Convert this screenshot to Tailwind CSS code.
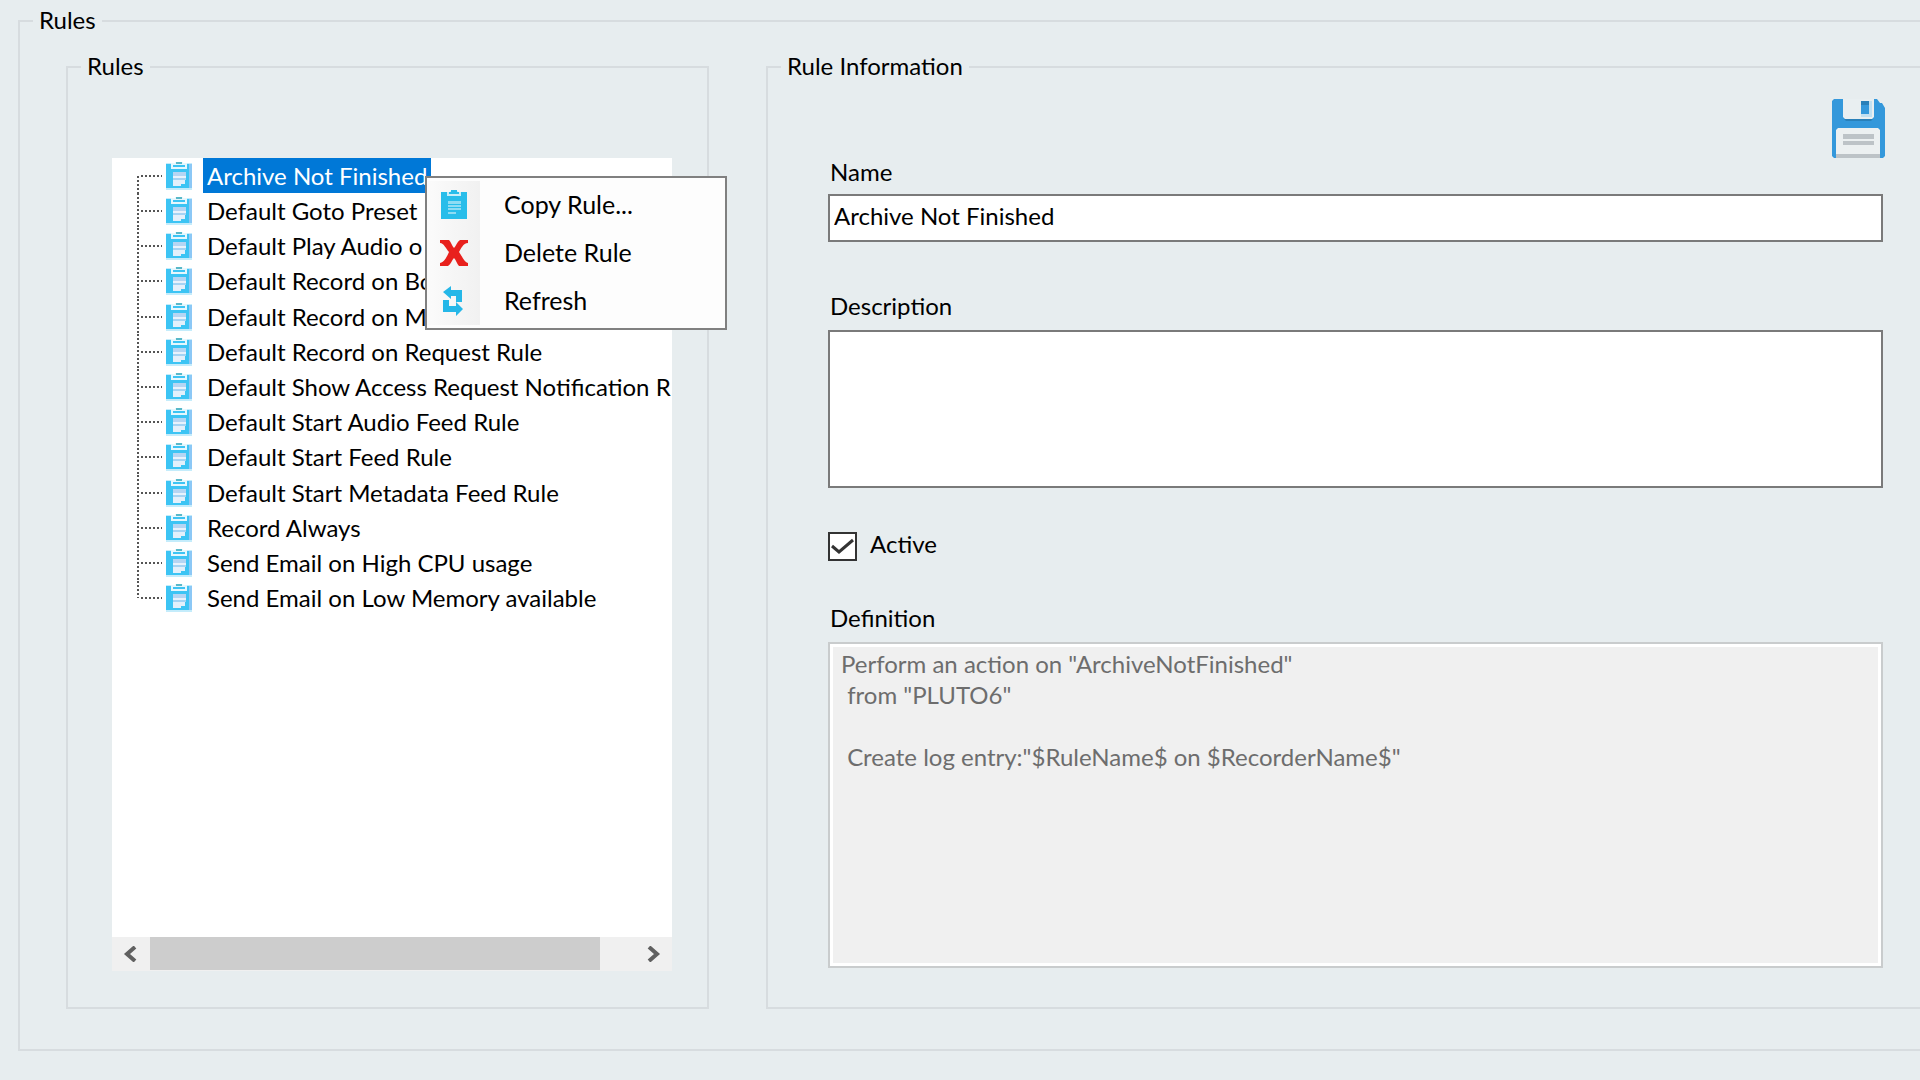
<!DOCTYPE html>
<html lang="en">
  <head>
    <meta charset="UTF-8">
    <meta name="viewport" content="width=device-width, initial-scale=1.0">
    <title>Rules</title>
    <script src="https://cdn.jsdelivr.net/npm/@tailwindcss/browser@4"></script>
  </head>
  <body class="flex min-h-screen flex-col bg-[#e7edef] pt-[6px] pb-[29px] pl-[18px] font-['Lato',sans-serif] text-2xl leading-7 text-black">
    <!-- Shared icons -->
    <svg class="hidden" aria-hidden="true">
      <symbol id="clipboard" viewBox="0 0 26 28">
        <path fill="#3cc4f4" d="M0 2h26v24H0z" />
        <path fill="#8cc8f6" d="M23 2h3v24h-3z" />
        <path fill="#c4ecfb" d="M0 26h26v2H0zM0 1h5v1H0zM21 1h5v1h-5z" />
        <path fill="#e6f7fd" d="M5 1h4V0h8v1h4v6H5z" />
        <path fill="#3cc4f4" d="M7 3h12v2H7z" />
        <path fill="#58b8c8" d="M10 0h6v2h-6z" />
        <path fill="#b5d5f3" d="M7 10h13v4H7z" />
        <path fill="#e8f2fc" d="M7 14h13v2H7z" />
        <path fill="#a5d3f3" d="M7 16h13v2H7z" />
        <path fill="#e3f0fb" d="M7 18h12v4h-4v2H7z" />
      </symbol>
      <symbol id="copy" viewBox="0 0 28 30">
        <path fill="#28bdea" d="M1 2h26v27H1z" />
        <path fill="#c9eef9" d="M7 2h3V1h8v1h3v4H7z" />
        <path fill="#28bdea" d="M9 2h10v2H9zM11 0h6v3h-6z" />
        <path fill="#8edcf3" d="M8 11h13v3H8zM8 15h13v2H8zM8 18h13v2H8zM8 22h8v2H8z" />
      </symbol>
    </svg>

    <fieldset class="flex min-w-0 flex-1 flex-col border-2 border-r-0 border-[#d7dcdf]">
      <legend class="ml-[13px] px-[6px] pb-[2px]">Rules</legend>
      <div class="grid flex-1 grid-cols-[643fr_1154fr] gap-[57px] pt-4 pb-10 pl-[46px]">

        <!-- Rule tree -->
        <fieldset class="flex min-w-0 flex-col border-2 border-[#d7dcdf]">
          <legend class="ml-[13px] px-[6px] pb-[2px]">Rules</legend>
          <div class="relative mt-[76px] mr-[35px] mb-[36px] ml-[44px] flex flex-1 flex-col bg-white">
            <div class="flex-1 overflow-hidden">
              <ul id="tree" class="grid h-[458px] auto-rows-fr whitespace-nowrap"></ul>
            </div>
            <!-- Horizontal scrollbar -->
            <div class="flex h-[34px] bg-[#f0f0f0]">
              <button type="button" aria-label="Scroll left" class="flex w-[38px] items-center justify-center">
                <svg class="h-4 w-4" viewBox="0 0 16 16" fill="none" stroke="#606060" stroke-width="4"><path d="m12 1-8 7 8 7" /></svg>
              </button>
              <div class="flex-1 pb-px"><div class="h-full w-[93%] bg-[#cdcdcd]"></div></div>
              <button type="button" aria-label="Scroll right" class="flex w-[38px] items-center justify-center">
                <svg class="h-4 w-4" viewBox="0 0 16 16" fill="none" stroke="#606060" stroke-width="4"><path d="m4 1 8 7-8 7" /></svg>
              </button>
            </div>

            <!-- Context menu -->
            <div role="menu" class="absolute top-[18px] left-[313px] w-[302px] border-2 border-[#808080] bg-[#fdfdfd] py-[3px] text-[25px]">
              <button type="button" role="menuitem" class="flex h-12 w-full items-center text-left">
                <span class="flex h-full w-[53px] items-center bg-linear-to-r from-[#fbfbfb] to-[#f1f1f1] pl-[13px]">
                  <svg class="h-[30px] w-7"><use href="#copy" /></svg>
                </span>
                <span class="pb-[2px] pl-6">Copy Rule...</span>
              </button>
              <button type="button" role="menuitem" class="flex h-12 w-full items-center text-left">
                <span class="flex h-full w-[53px] items-center bg-linear-to-r from-[#fbfbfb] to-[#f1f1f1] pl-[12px]">
                  <svg class="h-7 w-[30px]" viewBox="0 0 30 28" fill="#e8211d">
                    <path d="M1 1h9c2 2 3 6 5 8 2-2 3-6 6-8h8v3c-5 0-7 6-9 9 3 4 5 10 9 11v3h-9c-2-2-3-6-5-8-2 2-3 6-6 8H1v-3c5-1 7-7 9-11C7 10 5 4 1 4z" />
                  </svg>
                </span>
                <span class="pb-[2px] pl-6">Delete Rule</span>
              </button>
              <button type="button" role="menuitem" class="flex h-12 w-full items-center text-left">
                <span class="flex h-full w-[53px] items-center bg-linear-to-r from-[#fbfbfb] to-[#f1f1f1] pl-[15px]">
                  <svg class="h-8 w-[22px]" viewBox="0 0 22 32" fill="#25b7e8">
                    <path d="M1 7 9 1v4h11v12h-6v-6H9v3z" />
                    <path d="M21 24l-7 7v-4H1V15h6v6h7v-4z" />
                  </svg>
                </span>
                <span class="pb-[2px] pl-6">Refresh</span>
              </button>
            </div>
          </div>
        </fieldset>

        <!-- Rule details -->
        <fieldset class="flex min-w-0 flex-col border-2 border-r-0 border-[#d7dcdf]">
          <legend class="ml-[13px] px-[6px] pb-[2px]">Rule Information</legend>
          <div class="flex justify-end pt-[17px] pr-[35px]">
            <button type="button" aria-label="Save">
              <svg class="h-[59px] w-[53px]" viewBox="0 0 53 59">
                <path fill="#3498db" d="M2 0h43l3 4h2l3 5v48l-2 2H2l-2-2V2z" />
                <path fill="#e9eff1" d="M11 0h31v18l-2 2H13l-2-2z" />
                <path fill="#2980b9" d="M12 20h29l-2 2H14zM29 2h8v4h-8z" />
                <path fill="#3498db" d="M29 6h8v9h-8z" />
                <path fill="#c2e0f1" d="M37 2h3v16H29v-3h8z" />
                <path fill="#ecf0f1" d="M6 29h40l2 2v25H4V31z" />
                <path fill="#bdc3c7" d="M11 35h31v5H11zM11 42h31v4H11zM4 55h44v4H4z" />
              </svg>
            </button>
          </div>
          <div class="flex flex-1 flex-col pr-[37px] pb-[39px] pl-[60px]">
            <label for="name" class="mb-[6px] pb-[2px] pl-[2px]">Name</label>
            <input id="name" type="text" value="Archive Not Finished" class="h-12 w-full border-2 border-[#7a7a7a] bg-white px-1 pb-[6px]">
            <label for="description" class="mt-[50px] mb-2 pb-[2px] pl-[2px]">Description</label>
            <textarea id="description" class="h-[158px] w-full resize-none border-2 border-[#7a7a7a] bg-white px-1"></textarea>
            <div class="mt-11 flex items-center gap-[13px]">
              <span class="relative flex">
                <input id="active" type="checkbox" checked class="h-[29px] w-[29px] appearance-none border-2 border-[#333] bg-white">
                <svg class="pointer-events-none absolute inset-0 h-full w-full" viewBox="0 0 29 29" fill="none" stroke="#333" stroke-width="3"><path d="m4 14 7 6L25 8" /></svg>
              </span>
              <label for="active" class="-mt-1 pb-[2px]">Active</label>
            </div>
            <label for="definition" class="mt-[43px] mb-2 pb-[2px] pl-[2px]">Definition</label>
            <textarea id="definition" readonly class="min-h-[326px] w-full flex-1 resize-none border-2 border-[#c9cccd] bg-[#f0f0f0] px-[11px] pt-1 leading-[31px] text-[#6d6d6d] inset-ring-3 inset-ring-white">Perform an action on "ArchiveNotFinished"
 from "PLUTO6"

 Create log entry:"$RuleName$ on $RecorderName$"</textarea>
          </div>
        </fieldset>
      </div>
    </fieldset>

    <script>
      const rules = [
        'Archive Not Finished',
        'Default Goto Preset',
        'Default Play Audio o',
        'Default Record on Bo',
        'Default Record on M',
        'Default Record on Request Rule',
        'Default Show Access Request Notification R',
        'Default Start Audio Feed Rule',
        'Default Start Feed Rule',
        'Default Start Metadata Feed Rule',
        'Record Always',
        'Send Email on High CPU usage',
        'Send Email on Low Memory available',
      ]

      document.getElementById('tree').innerHTML = rules.map((rule, i) => {
        // the vertical line starts at the first row's middle and stops at the last one's
        const line = i === 0 ? 'items-end' : 'items-start'
        const height = i === 0 || i === rules.length - 1 ? 'h-1/2' : 'h-full'
        const selected = i === 0 ? 'bg-[#0078d7] text-white' : ''
        return `
          <li class="flex items-center pl-[25px]">
            <span class="flex h-full ${line}"><span class="${height} w-[2px] bg-[repeating-linear-gradient(to_bottom,#555_0_2px,transparent_2px_4px)]"></span></span>
            <span class="h-[2px] w-[23px] bg-[repeating-linear-gradient(to_right,transparent_0_2px,#555_2px_4px)]"></span>
            <svg class="ml-1 h-7 w-[26px] shrink-0"><use href="#clipboard" /></svg>
            <a href="#" class="ml-[11px] flex h-full items-center px-1 ${selected}">${rule}</a>
          </li>`
      }).join('')
    </script>
  </body>
</html>
